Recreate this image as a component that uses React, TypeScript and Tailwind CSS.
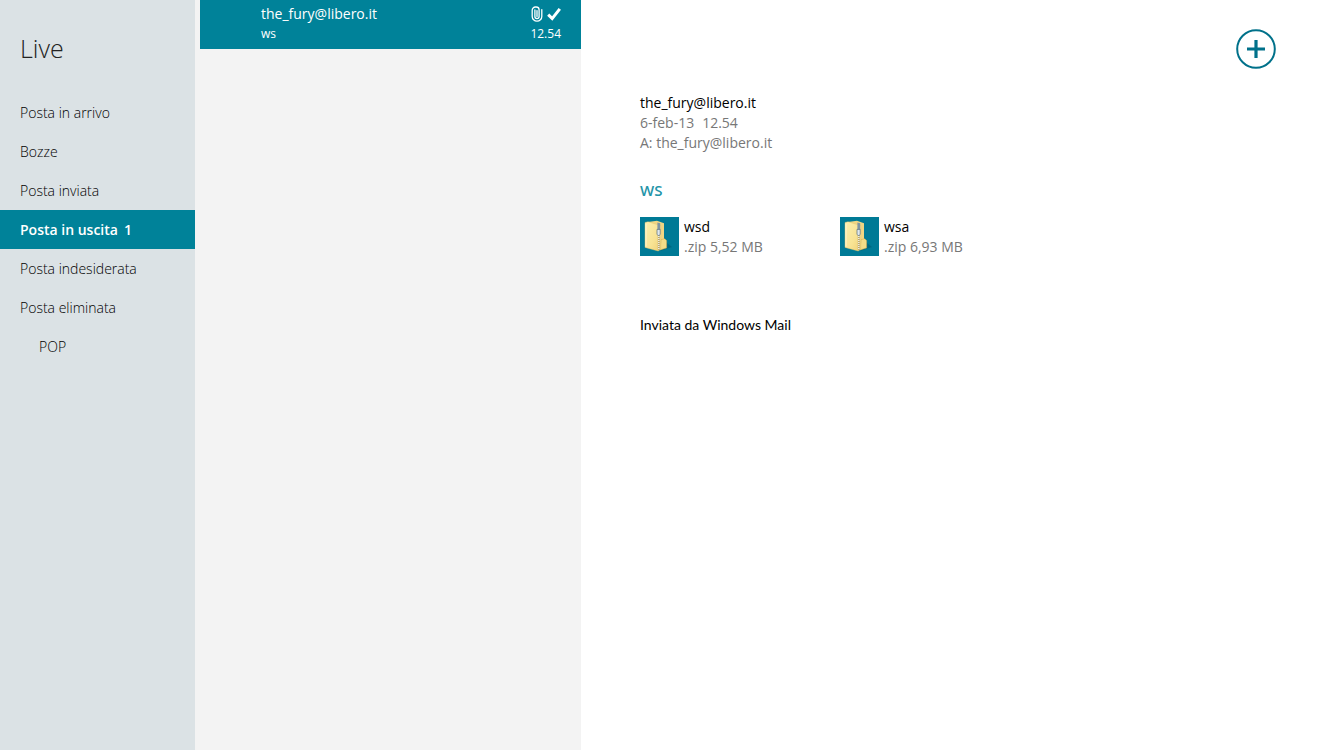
interface Folder {
  name: string;
  count?: number;
  nested?: boolean;
}

interface Attachment {
  id: string;
  name: string;
  info: string;
}

const folders: Folder[] = [
  { name: "Posta in arrivo" },
  { name: "Bozze" },
  { name: "Posta inviata" },
  { name: "Posta in uscita", count: 1 },
  { name: "Posta indesiderata" },
  { name: "Posta eliminata" },
  { name: "POP", nested: true },
];

const attachments: Attachment[] = [
  { id: "wsd", name: "wsd", info: ".zip 5,52 MB" },
  { id: "wsa", name: "wsa", info: ".zip 6,93 MB" },
];

const activeFolder = "Posta in uscita";

function PaperclipIcon() {
  return (
    <svg viewBox="0 0 12 16" className="h-4 w-3" fill="none" stroke="white" strokeWidth="1.3" strokeLinecap="round" aria-hidden="true">
      <path d="M3.9 4v6.6a2.1 2.1 0 0 0 4.2 0V3.7A2.9 2.9 0 0 0 5.2 1H4.4a3.2 3.2 0 0 0-3.2 3.2v6.2a4.8 4.8 0 0 0 9.6 0V3.6M6 4.6v6" />
    </svg>
  );
}

function CheckIcon() {
  return (
    <svg viewBox="0 0 14 14" className="h-3.5 w-3.5" fill="none" stroke="white" strokeWidth="3" aria-hidden="true">
      <path d="M1.2 7.6l4 4L12.8 1.8" />
    </svg>
  );
}

function ZipFolderIcon({ id }: { id: string }) {
  const front = `front-${id}`;
  return (
    <svg viewBox="0 0 39 39" className="h-[39px] w-[39px] shrink-0" aria-hidden="true">
      <defs>
        <linearGradient id={front} x1="0" y1="0" x2="1" y2="1">
          <stop offset="0" stopColor="#fcf0b0" />
          <stop offset="0.6" stopColor="#f8e394" />
          <stop offset="1" stopColor="#efcf74" />
        </linearGradient>
      </defs>
      <rect width="39" height="39" fill="#007a96" />
      <path d="M20 34l12-4-5-4z" fill="#003c50" opacity="0.3" />
      {/* back cover and tab */}
      <path d="M8 5l9-1.2 7 2.4v25l-5 2z" fill="#f0d684" />
      <path d="M21 22.6l3.8-.8 1.8 1.7v7.4L20 33z" fill="#f6dd88" stroke="#cfa64a" strokeWidth="0.5" />
      <path d="M5 5.5l3-.8 12.8 4V32l-2.6 2L5 30.4z" fill={`url(#${front})`} stroke="#dfc06a" strokeWidth="0.4" />
      <path d="M6 6.6v23" stroke="#fffbe0" strokeWidth="0.8" />
      {/* zipper */}
      <path d="M18.8 17v15.8" stroke="#bba870" strokeWidth="2" />
      <path d="M18.8 17v15.8" stroke="#f2f3ee" strokeWidth="1.4" strokeDasharray="1 1" />
      <path d="M17.4 5.6l2.8.6v6.6h-2.8z" fill="#8195a3" />
      <path d="M17 12.4h3.2v4.8l-1.6 1.8-1.6-1.8z" fill="#e1e8ec" stroke="#536b7c" strokeWidth="0.7" />
    </svg>
  );
}

function Sidebar() {
  return (
    <aside className="w-[195px] shrink-0 bg-[#dbe2e5]">
      <h1 className="px-5 pt-8 pb-7 text-[25px] leading-[33px] font-light text-[#222]">Live</h1>
      <nav>
        {folders.map((folder) => {
          const active = folder.name === activeFolder;
          return (
            <a
              key={folder.name}
              href="#"
              className={`flex h-[39px] items-center gap-1.5 pr-5 text-sm whitespace-nowrap ${folder.nested ? "pl-[39px]" : "pl-5"} ${
                active ? "bg-[#008299] font-semibold text-white" : "font-light text-black"
              }`}
            >
              <span>{folder.name}</span>
              {folder.count && <span>{folder.count}</span>}
            </a>
          );
        })}
      </nav>
    </aside>
  );
}

function MessageList() {
  return (
    <section className="w-[386px] shrink-0 bg-[#f3f3f3] pl-[5px]">
      <a href="#" className="flex h-[49px] justify-between bg-[#008299] pt-1 pr-5 pl-[61px] text-white">
        <div>
          <p className="text-sm leading-5">the_fury@libero.it</p>
          <p className="text-xs leading-5">ws</p>
        </div>
        <div className="flex flex-col items-end">
          <div className="flex h-5 items-center gap-1">
            <PaperclipIcon />
            <CheckIcon />
          </div>
          <p className="text-xs leading-5">12.54</p>
        </div>
      </a>
    </section>
  );
}

function Message() {
  return (
    <main className="relative min-w-0 flex-1 pt-[93px] pr-[58px] pl-[59px] text-sm">
      <button type="button" aria-label="Nuovo messaggio" className="absolute top-[29px] right-[58px] h-10 w-10">
        <svg viewBox="0 0 40 40" fill="none" stroke="#00718a" aria-hidden="true">
          <circle cx="20" cy="20" r="18.8" strokeWidth="2" />
          <path d="M11 20h18M20 11v18" strokeWidth="3.2" />
        </svg>
      </button>

      <header className="leading-5">
        <p className="text-black">the_fury@libero.it</p>
        <p className="flex gap-2 text-[#777]">
          <span>6-feb-13</span>
          <span>12.54</span>
        </p>
        <p className="text-[#777]">A: the_fury@libero.it</p>
      </header>

      <h2 className="mt-[27px] text-[15px] font-semibold leading-5 text-[#2494a8]">WS</h2>

      <ul className="mt-[17px] flex flex-wrap">
        {attachments.map((file) => (
          <li key={file.id} className="w-[200px]">
            <a href="#" className="flex gap-[5px]">
              <ZipFolderIcon id={file.id} />
              <div className="leading-5">
                <p className="text-black">{file.name}</p>
                <p className="text-[#777]">{file.info}</p>
              </div>
            </a>
          </li>
        ))}
      </ul>

      <p className="mt-[58px] font-['Lato',sans-serif] leading-5 text-black">Inviata da Windows Mail</p>
    </main>
  );
}

export default function App() {
  return (
    <div className="flex min-h-screen bg-white font-['Open_Sans','Noto_Sans',sans-serif]">
      <Sidebar />
      <MessageList />
      <Message />
    </div>
  );
}
